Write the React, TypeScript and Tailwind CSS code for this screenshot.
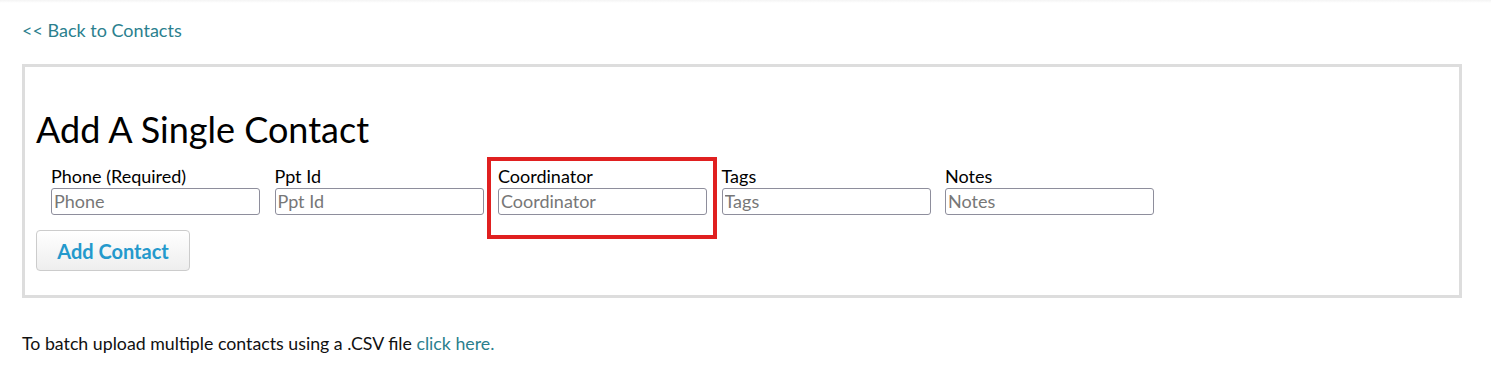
const fields = [
  { label: "Phone (Required)", placeholder: "Phone" },
  { label: "Ppt Id", placeholder: "Ppt Id" },
  { label: "Coordinator", placeholder: "Coordinator", highlight: true },
  { label: "Tags", placeholder: "Tags" },
  { label: "Notes", placeholder: "Notes" },
];

export default function App() {
  return (
    <div className="min-h-[386px] bg-white px-[22px] font-['Lato','Liberation_Sans',sans-serif] text-[18px] text-[#111]">
      <div className="h-[3px] -mx-[22px] bg-gradient-to-b from-[#f4f4f4] to-white" />
      <div className="pt-[15px] leading-6">
        <a href="#" className="text-[#2b7f8e]">&lt;&lt; Back to Contacts</a>
      </div>

      <div className="mt-[22px] w-[1440px] border-[3px] border-[#dddddd] px-[11px] pt-[40px] pb-[24px]">
        <h2 className="text-[36px] leading-[44px] text-black">Add A Single Contact</h2>

        <div className="mt-[14px] flex gap-[14.5px] pl-[15px]">
          {fields.map((field) => (
            <div key={field.label} className="relative w-[209px]">
              {field.highlight && (
                <div className="pointer-events-none absolute -left-[11px] -right-[10px] -top-[8px] -bottom-[24px] border-4 border-[#e02020]" />
              )}
              <label className="block leading-[23px] text-black">{field.label}</label>
              <input
                placeholder={field.placeholder}
                className="block h-[27px] w-full rounded-[3px] border border-[#8e8e9c] px-[2px] text-[18px] outline-none placeholder:text-[#777777]"
              />
            </div>
          ))}
        </div>

        <button className="mt-[15px] h-[41px] w-[154px] rounded-[4px] border border-[#cccccc] bg-gradient-to-b from-white to-[#eeeeee] text-[20px] font-bold text-[#2499cc]">
          Add Contact
        </button>
      </div>

      <p className="mt-[33px] text-[17.75px] leading-6">
        To batch upload multiple contacts using a .CSV file{" "}
        <a href="#" className="text-[#2b7f8e]">click here.</a>
      </p>
    </div>
  );
}
